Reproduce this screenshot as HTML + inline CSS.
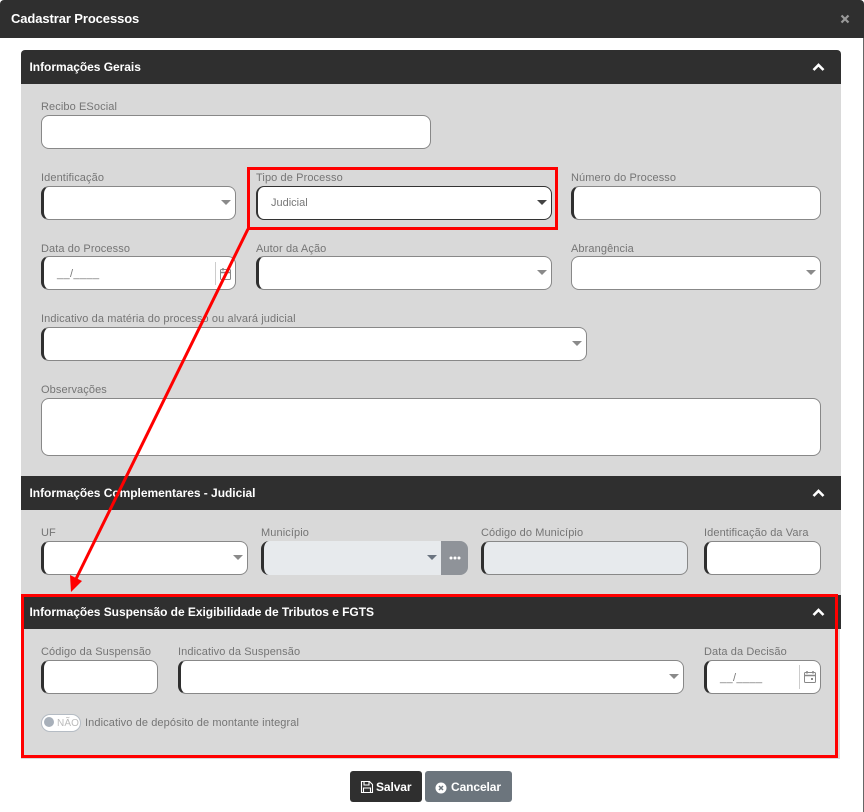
<!DOCTYPE html>
<html lang="pt-BR"><head><meta charset="utf-8"><title>Cadastrar Processos</title>
<style>
*{box-sizing:border-box}
html,body{margin:0;padding:0;background:#fff}
body{width:864px;height:812px;position:relative;overflow:hidden;font-family:"Liberation Sans",sans-serif;color:#757575}
div,span{position:absolute}
.top{left:0;top:0;width:864px;height:38px;background:#2f2f2f;border-radius:4px 4px 0 0}
.edge{left:863px;top:38px;width:1px;height:774px;background:#666}
.title{left:11px;top:11px;font:bold 13px/16px "Liberation Sans",sans-serif;color:#fff;white-space:nowrap;letter-spacing:-.1px}
.sh{left:21px;width:820px;height:34px;background:#2f2f2f}
.sh b{position:absolute;left:8.5px;top:10px;font:bold 12px/15px "Liberation Sans",sans-serif;color:#fff;white-space:nowrap;letter-spacing:-.04px}
.sb{left:21px;width:820px;background:#d9d9d9}
.l{font-size:11px;line-height:13px;color:#757575;white-space:nowrap;letter-spacing:.1px}
.f{height:34px;background:#fff;border:1px solid #888;border-radius:8px}
.r{border-left:3px solid #2f2f2f}
.d{background:#e7eaed}
.c{width:0;height:0;border-left:5px solid transparent;border-right:5px solid transparent;border-top:5px solid #8a8a8a}
.m{font-size:11px;color:#777;white-space:nowrap;letter-spacing:.4px}
svg{position:absolute;overflow:visible}
</style></head><body>
<div class="top"></div><div class="edge"></div>
<div class="title">Cadastrar Processos</div>
<svg style="left:840px;top:14px" width="10" height="10"><path d="M1.5 1.5L8.5 8.5M8.5 1.5L1.5 8.5" stroke="#999" stroke-width="2.2"/></svg>

<div class="sb" style="top:84px;height:392px"></div>
<div class="sh" style="top:50px;border-radius:4px 4px 0 0"><b>Informações Gerais</b></div>
<div class="sb" style="top:510px;height:85px"></div>
<div class="sh" style="top:476px"><b>Informações Complementares - Judicial</b></div>
<div class="sb" style="top:629px;height:130px;width:819px"></div>
<div class="sh" style="top:595px"><b>Informações Suspensão de Exigibilidade de Tributos e FGTS</b></div>
<svg style="left:812px;top:63px" width="13" height="9"><path d="M1.5 7L6.5 2L11.5 7" fill="none" stroke="#fff" stroke-width="2.6"/></svg>
<svg style="left:812px;top:489px" width="13" height="9"><path d="M1.5 7L6.5 2L11.5 7" fill="none" stroke="#fff" stroke-width="2.6"/></svg>
<svg style="left:812px;top:608px" width="13" height="9"><path d="M1.5 7L6.5 2L11.5 7" fill="none" stroke="#fff" stroke-width="2.6"/></svg>

<div class="l" style="left:41px;top:101px">Recibo ESocial</div>
<div class="f" style="left:41px;top:115px;width:390px"></div>

<div class="l" style="left:41px;top:172px">Identificação</div>
<div class="f r" style="left:41px;top:186px;width:195px"></div><div class="c" style="left:221px;top:200px"></div>
<div class="l" style="left:256px;top:172px">Tipo de Processo</div>
<div class="f r" style="left:256px;top:186px;width:296px;border-color:#333;border-width:1px 1px 1px 2px"></div>
<div class="l" style="left:271px;top:197px;letter-spacing:0;font-size:11px;color:#777">Judicial</div>
<div class="c" style="left:537px;top:200px;border-top-color:#444"></div>
<div class="l" style="left:571px;top:172px">Número do Processo</div>
<div class="f r" style="left:571px;top:186px;width:250px"></div>

<div class="l" style="left:41px;top:243px">Data do Processo</div>
<div class="f r" style="left:41px;top:256px;width:195px"></div>
<div class="m" style="left:57px;top:268px">__/____</div>
<div style="left:215px;top:262px;width:1px;height:23px;background:#ccc"></div>
<svg style="left:220px;top:268px" width="11" height="12" fill="none" stroke="#888"><rect x=".5" y="1.5" width="10" height="10" rx="1"/><path d="M.5 4.5H10.5M3 0V2.5M8 0V2.5" stroke-width="1.5"/></svg>
<div class="l" style="left:256px;top:243px">Autor da Ação</div>
<div class="f r" style="left:256px;top:256px;width:296px"></div><div class="c" style="left:537px;top:270px"></div>
<div class="l" style="left:571px;top:243px">Abrangência</div>
<div class="f" style="left:571px;top:256px;width:250px"></div><div class="c" style="left:806px;top:270px"></div>

<div class="l" style="left:41px;top:313px">Indicativo da matéria do processo ou alvará judicial</div>
<div class="f r" style="left:41px;top:327px;width:546px"></div><div class="c" style="left:572px;top:341px"></div>

<div class="l" style="left:41px;top:384px">Observações</div>
<div class="f" style="left:41px;top:398px;width:780px;height:58px"></div>

<div class="l" style="left:41px;top:527px">UF</div>
<div class="f r" style="left:41px;top:541px;width:207px"></div><div class="c" style="left:233px;top:555px"></div>
<div class="l" style="left:261px;top:527px">Município</div>
<div class="f r d" style="left:261px;top:541px;width:181px;border-width:0 0 0 3px;border-radius:8px 0 0 8px"></div>
<div class="c" style="left:427px;top:555px;border-top-color:#6b7480"></div>
<div style="left:441px;top:541px;width:27px;height:34px;background:#8f9399;border-radius:0 8px 8px 0"></div>
<svg style="left:449px;top:556px" width="12" height="4" fill="#fff"><circle cx="2" cy="2" r="1.5"/><circle cx="6" cy="2" r="1.5"/><circle cx="10" cy="2" r="1.5"/></svg>
<div class="l" style="left:481px;top:527px">Código do Município</div>
<div class="f r d" style="left:481px;top:541px;width:207px"></div>
<div class="l" style="left:704px;top:527px">Identificação da Vara</div>
<div class="f r" style="left:704px;top:541px;width:117px"></div>

<div class="l" style="left:41px;top:646px">Código da Suspensão</div>
<div class="f r" style="left:41px;top:660px;width:117px"></div>
<div class="l" style="left:178px;top:646px">Indicativo da Suspensão</div>
<div class="f r" style="left:178px;top:660px;width:506px"></div><div class="c" style="left:669px;top:674px"></div>
<div class="l" style="left:704px;top:646px">Data da Decisão</div>
<div class="f r" style="left:704px;top:660px;width:117px"></div>
<div class="m" style="left:720px;top:672px">__/____</div>
<div style="left:799px;top:665px;width:1px;height:24px;background:#ccc"></div>
<svg style="left:804px;top:671px" width="12" height="12" fill="none" stroke="#888"><rect x=".5" y="1.5" width="11" height="10" rx="1"/><path d="M.5 4.5H11.5M3 0V2.5M9 0V2.5" stroke-width="1.5"/><rect x="7" y="7" width="2" height="2" fill="#888" stroke="none"/></svg>

<div style="left:41px;top:714px;width:40px;height:18px;background:#fff;border:1px solid #b5bcc4;border-radius:9px"></div>
<div style="left:44px;top:717px;width:10px;height:10px;border-radius:50%;background:#a8b0ba"></div>
<div class="l" style="left:57px;top:717px;font-size:10px;color:#bbb;letter-spacing:.1px">NÃO</div>
<div class="l" style="left:85px;top:717px;letter-spacing:.1px">Indicativo de depósito de montante integral</div>

<div style="left:350px;top:771px;width:72px;height:31px;background:#2f2f2f;border-radius:3px"></div>
<svg style="left:361px;top:781px" width="12" height="12" fill="none" stroke="#fff" stroke-width="1.1"><path d="M.5.5H8.5L11.5 3.5V11.5H.5ZM3 .5V4H8V.5M2.5 11.5V7H9.5V11.5"/></svg>
<div class="l" style="left:376px;top:780px;font:bold 12px/15px 'Liberation Sans',sans-serif;color:#fff;letter-spacing:-.1px">Salvar</div>
<div style="left:425px;top:771px;width:87px;height:31px;background:#6c757d;border-radius:3px"></div>
<svg style="left:435px;top:782px" width="12" height="12"><circle cx="6" cy="6" r="5.5" fill="#fff"/><path d="M4 4L8 8M8 4L4 8" stroke="#6c757d" stroke-width="1.5"/></svg>
<div class="l" style="left:451px;top:780px;font:bold 12px/15px 'Liberation Sans',sans-serif;color:#fff;letter-spacing:-.1px">Cancelar</div>

<svg style="left:0;top:0" width="864" height="812">
<rect x="248.5" y="168.5" width="308" height="60" fill="none" stroke="#f00" stroke-width="3"/>
<rect x="22.5" y="595.5" width="814" height="161" fill="none" stroke="#f00" stroke-width="3"/>
<path d="M248 229L75 581" stroke="#f00" stroke-width="3" fill="none"/>
<path d="M71 592L70 575L82 581Z" fill="#f00"/>
</svg>
</body></html>
